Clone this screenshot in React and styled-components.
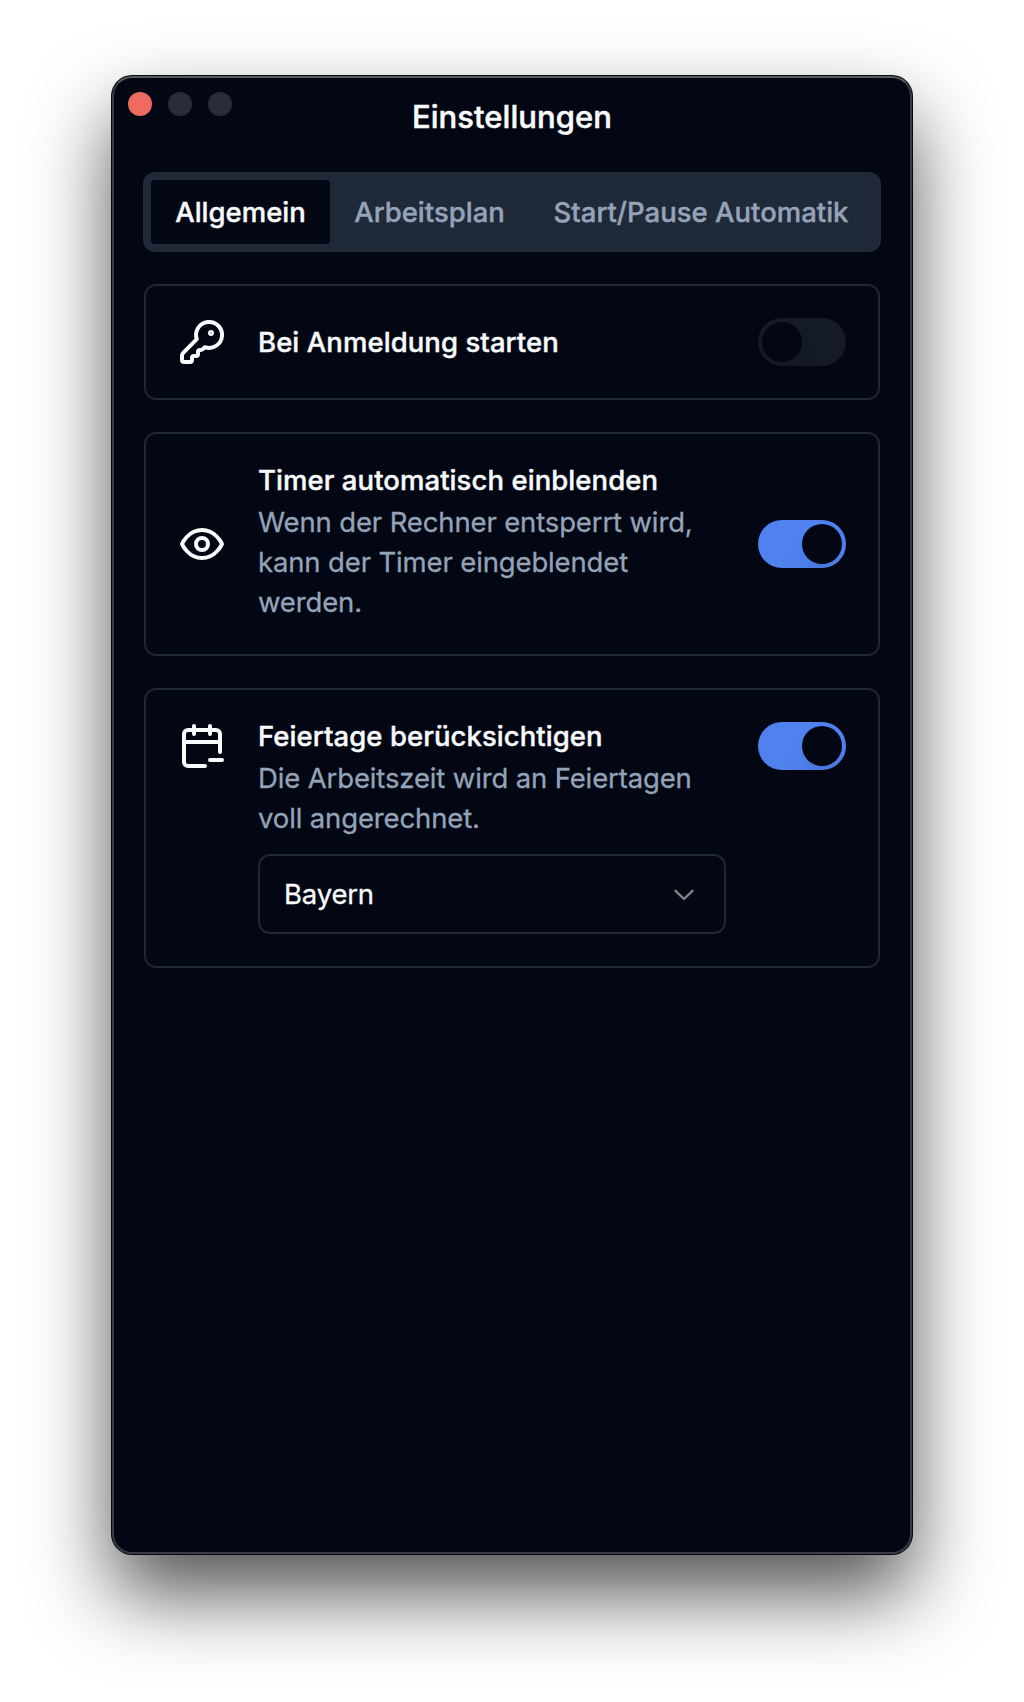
import React, { useState } from "react";
import styled, { createGlobalStyle, css } from "styled-components";

const color = {
  background: "#020713",
  foreground: "#f8fafc",
  muted: "#94a3b8",
  surface: "#202938",
  border: "#1e2737",
  primary: "#4f82ee",
  switchOff: "#141a28",
};

const GlobalStyle = createGlobalStyle`
  *, *::before, *::after { box-sizing: border-box; }
  body {
    margin: 0;
    background: #fff;
    color: ${color.foreground};
    font-family: Inter, "Liberation Sans", sans-serif;
    font-size: 27.5px;
    line-height: 40px;
  }
  button { font: inherit; color: inherit; margin: 0; border: 0; }
  h1, h2, p { margin: 0; }
`;

const Desktop = styled.div`
  display: flex;
  justify-content: center;
  align-items: flex-start;
  height: 1702px;
  padding-top: 76px;
  overflow: hidden;
`;

const Window = styled.main`
  display: flex;
  flex-direction: column;
  width: 800px;
  height: 1478px;
  border: 2px solid #393b45;
  border-top-color: #555b60;
  border-radius: 20px;
  background: ${color.background};
  box-shadow: 0 0 0 1px #05070a, 0 40px 80px rgba(0, 0, 0, 0.68);
`;

const TitleBar = styled.header`
  display: grid;
  grid-template-columns: 1fr auto 1fr;
  align-items: start;
  padding: 14px 14px 31px;
`;

const WindowControls = styled.div`
  display: flex;
  gap: 16px;
`;

const Control = styled.span`
  width: 24px;
  height: 24px;
  border-radius: 50%;
  background: ${(p) => (p.$close ? "#ed6b60" : "#292b36")};
`;

const Title = styled.h1`
  margin-top: 1px;
  font-size: 31px;
  font-weight: 500;
  line-height: 48px;
  letter-spacing: 0.05px;
  -webkit-text-stroke: 0.5px currentColor;
`;

const TabList = styled.nav`
  display: flex;
  align-self: center;
  padding: 8px;
  border-radius: 12px;
  background: ${color.surface};
`;

const Tab = styled.button`
  width: ${(p) => p.$width}px;
  height: 64px;
  padding: 0;
  border-radius: 4px;
  background: transparent;
  color: ${color.muted};
  font-weight: 500;
  white-space: nowrap;
  -webkit-text-stroke: 0.4px currentColor;
  ${(p) =>
    p.$active &&
    css`
      background: ${color.background};
      color: ${color.foreground};
    `}
`;

const Settings = styled.section`
  display: flex;
  flex-direction: column;
  gap: 32px;
  padding: 32px 30px;
`;

const Card = styled.article`
  display: flex;
  align-items: ${(p) => (p.$alignTop ? "flex-start" : "center")};
  gap: 32px;
  padding: 32px;
  border: 2px solid ${color.border};
  border-radius: 12px;
`;

const Icon = styled.svg`
  flex: none;
  width: 48px;
  height: 48px;
  fill: none;
  stroke: currentColor;
  stroke-width: 2;
  stroke-linecap: round;
  stroke-linejoin: round;
`;

const CardBody = styled.div`
  flex: 1;
  min-width: 0;
`;

const CardTitle = styled.h2`
  font-size: inherit;
  font-weight: 500;
  line-height: 28px;
  letter-spacing: 0.07px;
  white-space: nowrap;
  -webkit-text-stroke: 0.4px currentColor;
`;

const Description = styled.p`
  margin-top: 8px;
  color: ${color.muted};
  letter-spacing: -0.14px;
  -webkit-text-stroke: 0.3px currentColor;
`;

const SwitchTrack = styled.button`
  display: flex;
  flex: none;
  justify-content: ${(p) => (p.$on ? "flex-end" : "flex-start")};
  width: 88px;
  height: 48px;
  padding: 4px;
  border-radius: 24px;
  overflow: hidden;
  background: ${(p) => (p.$on ? color.primary : color.switchOff)};
`;

const Thumb = styled.span`
  width: 40px;
  height: 40px;
  border-radius: 50%;
  background: ${color.background};
  box-shadow: 0 20px 30px -6px rgba(0, 0, 0, 0.1), 0 8px 12px -8px rgba(0, 0, 0, 0.1);
`;

const SelectTrigger = styled.button`
  display: flex;
  align-items: center;
  justify-content: space-between;
  width: 100%;
  height: 80px;
  margin-top: 16px;
  padding: 0 24px;
  border: 2px solid ${color.border};
  border-radius: 12px;
  background: transparent;
  letter-spacing: -0.18px;
  -webkit-text-stroke: 0.3px currentColor;
`;

const Chevron = styled.svg`
  width: 32px;
  height: 32px;
  margin-bottom: 2px;
  fill: currentColor;
  stroke: currentColor;
  stroke-width: 0.15;
  opacity: 0.5;
`;

function Switch({ initial, label }) {
  const [on, setOn] = useState(initial);
  return (
    <SwitchTrack $on={on} role="switch" aria-checked={on} aria-label={label} onClick={() => setOn(!on)}>
      <Thumb />
    </SwitchTrack>
  );
}

const KeyIcon = () => (
  <Icon viewBox="0 0 24 24">
    <path d="M2.586 17.414A2 2 0 0 0 2 18.828V21a1 1 0 0 0 1 1h3a1 1 0 0 0 1-1v-1a1 1 0 0 1 1-1h1a1 1 0 0 0 1-1v-1a1 1 0 0 1 1-1h.172a2 2 0 0 0 1.414-.586l.814-.814a6.5 6.5 0 1 0-4-4z" />
    <circle cx="16.5" cy="7.5" r=".5" fill="currentColor" />
  </Icon>
);

const EyeIcon = () => (
  <Icon viewBox="0 0 24 24">
    <path d="M2 12s3-7 10-7 10 7 10 7-3 7-10 7-10-7-10-7Z" />
    <circle cx="12" cy="12" r="3" />
  </Icon>
);

const CalendarMinusIcon = () => (
  <Icon viewBox="0 0 24 24">
    <path d="M21 15V6a2 2 0 0 0-2-2H5a2 2 0 0 0-2 2v14a2 2 0 0 0 2 2h8.5" />
    <path d="M16 2v4M8 2v4M3 10h18M16 19h6" />
  </Icon>
);

const tabs = [
  { label: "Allgemein", width: 179 },
  { label: "Arbeitsplan", width: 199 },
  { label: "Start/Pause Automatik", width: 344 },
];

export default function App() {
  const [active, setActive] = useState(0);
  return (
    <Desktop>
      <GlobalStyle />
      <Window>
        <TitleBar>
          <WindowControls>
            <Control $close />
            <Control />
            <Control />
          </WindowControls>
          <Title>Einstellungen</Title>
        </TitleBar>
        <TabList>
          {tabs.map((tab, i) => (
            <Tab key={tab.label} $width={tab.width} $active={i === active} onClick={() => setActive(i)}>
              {tab.label}
            </Tab>
          ))}
        </TabList>
        <Settings>
          <Card>
            <KeyIcon />
            <CardBody>
              <CardTitle>Bei Anmeldung starten</CardTitle>
            </CardBody>
            <Switch initial={false} label="Bei Anmeldung starten" />
          </Card>
          <Card>
            <EyeIcon />
            <CardBody>
              <CardTitle>Timer automatisch einblenden</CardTitle>
              <Description>
                Wenn der Rechner entsperrt wird, kann der Timer eingeblendet werden.
              </Description>
            </CardBody>
            <Switch initial label="Timer automatisch einblenden" />
          </Card>
          <Card $alignTop>
            <CalendarMinusIcon />
            <CardBody>
              <CardTitle>Feiertage berücksichtigen</CardTitle>
              <Description>Die Arbeitszeit wird an Feiertagen voll angerechnet.</Description>
              <SelectTrigger>
                Bayern
                <Chevron viewBox="0 0 15 15">
                  <path d="M3.135 6.158a.5.5 0 0 1 .707-.023L7.5 9.565l3.658-3.43a.5.5 0 0 1 .684.73l-4 3.75a.5.5 0 0 1-.684 0l-4-3.75a.5.5 0 0 1-.023-.707Z" />
                </Chevron>
              </SelectTrigger>
            </CardBody>
            <Switch initial label="Feiertage berücksichtigen" />
          </Card>
        </Settings>
      </Window>
    </Desktop>
  );
}
